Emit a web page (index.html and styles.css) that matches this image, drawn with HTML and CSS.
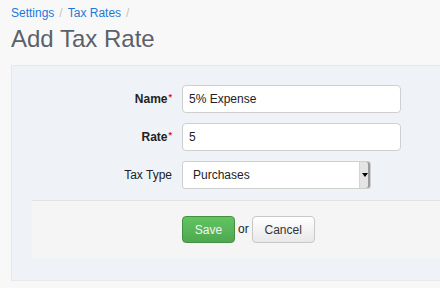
FILE: index.html
```html
<!DOCTYPE html>
<html>
<head>
<meta charset="utf-8">
<link rel="stylesheet" href="styles.css">
</head>
<body>
<div class="page">
  <div class="breadcrumb">
    <a href="#">Settings</a><span class="sep">/</span><a href="#">Tax Rates</a><span class="sep">/</span>
  </div>
  <h1 class="title">Add Tax Rate</h1>
  <div class="panel">
    <form class="form">
      <div class="row">
        <label class="label strong">Name<span class="req">*</span></label>
        <input class="input" type="text" value="5% Expense">
      </div>
      <div class="row">
        <label class="label strong">Rate<span class="req">*</span></label>
        <input class="input" type="text" value="5">
      </div>
      <div class="row">
        <label class="label">Tax Type</label>
        <div class="select">
          <span class="select-value">Purchases</span>
          <span class="select-btn"><span class="caret"></span></span>
        </div>
      </div>
      <div class="actions">
        <button type="button" class="btn btn-save">Save</button>
        <span class="or">or</span>
        <button type="button" class="btn btn-cancel">Cancel</button>
      </div>
    </form>
  </div>
</div>
</body>
</html>
```
FILE: styles.css
```css
html, body {
  margin: 0;
  padding: 0;
  background: #f8f8f8;
  font-family: "Liberation Sans", Arial, sans-serif;
  overflow: hidden;
}
.page {
  padding: 0 0 0 11px;
}
.breadcrumb {
  font-size: 12px;
  line-height: 16px;
  padding-top: 5px;
  height: 18px;
}
.breadcrumb a {
  color: #1f78d8;
  text-decoration: none;
}
.breadcrumb .sep {
  color: #c4c4c4;
  padding: 0 5px;
}
.title {
  margin: 0;
  font-size: 24px;
  font-weight: normal;
  color: #5b6169;
  line-height: 28px;
  height: 42px;
  padding-top: 2px;
  box-sizing: border-box;
}
.panel {
  height: 216px;
  box-sizing: border-box;
  background: #eff2f6;
  border: 1px solid #e6e8ea;
  border-right: none;
  padding-top: 19px;
}
.form {
  display: flex;
  flex-direction: column;
  gap: 10px;
}
.row {
  display: flex;
  align-items: center;
  gap: 10px;
  height: 28px;
}
.label {
  width: 160px;
  text-align: right;
  font-size: 12px;
  color: #222;
}
.label.strong {
  font-weight: bold;
}
.req {
  color: #e8112d;
  font-size: 9px;
  vertical-align: 3px;
  margin-left: 1px;
}
.input {
  width: 219px;
  height: 28px;
  box-sizing: border-box;
  border: 1px solid #cfcfcf;
  border-radius: 4px;
  background: #fff;
  padding: 0 6px;
  font-family: "Liberation Sans", Arial, sans-serif;
  font-size: 12px;
  color: #222;
  margin: 0;
}
.select {
  width: 189px;
  height: 28px;
  box-sizing: border-box;
  border: 1px solid #cfcfcf;
  border-radius: 3px;
  background: #fff;
  display: flex;
  align-items: stretch;
}
.select-value {
  flex: 1;
  font-size: 12px;
  color: #222;
  padding-left: 10px;
  display: flex;
  align-items: center;
}
.select-btn {
  width: 10px;
  background: #e4e4e4;
  border-left: 1px solid #d4d4d4;
  box-shadow: inset -2px 0 0 #9a9a9a;
  display: flex;
  align-items: center;
  justify-content: center;
  border-radius: 0 2px 2px 0;
}
.caret {
  width: 0;
  height: 0;
  border-left: 3px solid transparent;
  border-right: 3px solid transparent;
  border-top: 4px solid #000;
  margin-right: 1px;
}
.actions {
  margin-top: 1px;
  margin-left: 20px;
  height: 58px;
  box-sizing: border-box;
  background: #f5f5f5;
  border-top: 1px solid #e2e2e2;
  padding: 15px 0 0 150px;
  display: flex;
  align-items: flex-start;
}
.btn {
  height: 27px;
  box-sizing: border-box;
  border-radius: 4px;
  font-family: "Liberation Sans", Arial, sans-serif;
  font-size: 12px;
  padding: 0;
  margin: 0;
}
.btn-save {
  width: 53px;
  color: #eef8ee;
  background: linear-gradient(#62c462, #4fa84f);
  border: 1px solid #429142;
}
.or {
  font-size: 12px;
  color: #222;
  line-height: 27px;
  padding: 0 3px 0 3px;
}
.btn-cancel {
  width: 63px;
  color: #333;
  background: linear-gradient(#ffffff, #e8e8e8);
  border: 1px solid #c8c8c8;
}
```
